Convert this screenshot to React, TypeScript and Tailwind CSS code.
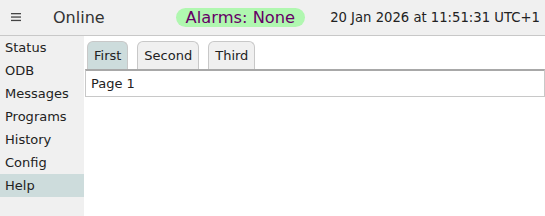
import { useState } from 'react';

const menu = ['Status', 'ODB', 'Messages', 'Programs', 'History', 'Config', 'Help'];
const tabs = ['First', 'Second', 'Third'];

const Header = () => (
  <div className="flex h-[36px] items-center border-b border-[#c8c8c8] bg-[#f0f0f0] text-[#333]">
    <svg width="10" height="9" viewBox="0 0 10 9" className="ml-[11px]" aria-hidden>
      <rect x="0" y="0" width="10" height="1.3" fill="#444" />
      <rect x="0" y="3.4" width="10" height="1.3" fill="#444" />
      <rect x="0" y="6.8" width="10" height="1.3" fill="#444" />
    </svg>
    <span className="ml-[32px] text-[16px]">Online</span>
    <span className="ml-[71px] rounded-full bg-[#b0f7b0] px-[10px] text-[16.3px] leading-[19px] text-[#660066]">
      Alarms: None
    </span>
    <span className="ml-[25px] text-[13.2px] text-[#222]">20 Jan 2026 at 11:51:31 UTC+1</span>
  </div>
);

export default function App() {
  const [active, setActive] = useState(0);

  return (
    <div className="h-[216px] w-[545px] overflow-hidden bg-white font-['DejaVu_Sans',sans-serif]">
      <Header />
      <div className="flex h-[180px]">
        {/* Sidebar */}
        <div className="w-[84px] bg-[#f0f0f0]">
          {menu.map((item) => (
            <div
              key={item}
              className={`h-[23px] pl-[5px] text-[13px] leading-[23px] text-[#222] ${
                item === 'Help' ? 'bg-[#cddcdc]' : ''
              }`}
            >
              {item}
            </div>
          ))}
        </div>

        {/* Main */}
        <div className="flex-1 pt-[5px]">
          <div className="ml-[3px] flex gap-[9px]">
            {tabs.map((t, i) => (
              <button
                key={t}
                onClick={() => setActive(i)}
                className={`h-[28px] rounded-t-[6px] border border-b-0 border-[#c8c8c8] px-[6px] text-[13px] text-[#222] ${
                  i === active ? 'bg-[#cddcdc]' : 'bg-[#f0f0f0]'
                }`}
              >
                {t}
              </button>
            ))}
          </div>
          <div className="ml-[1px] h-[28px] border border-t-2 border-[#c8c8c8] border-t-[#a8a8a8] px-[5px] text-[13px] leading-[25px] text-[#222]">
            Page {active + 1}
          </div>
        </div>
      </div>
    </div>
  );
}
